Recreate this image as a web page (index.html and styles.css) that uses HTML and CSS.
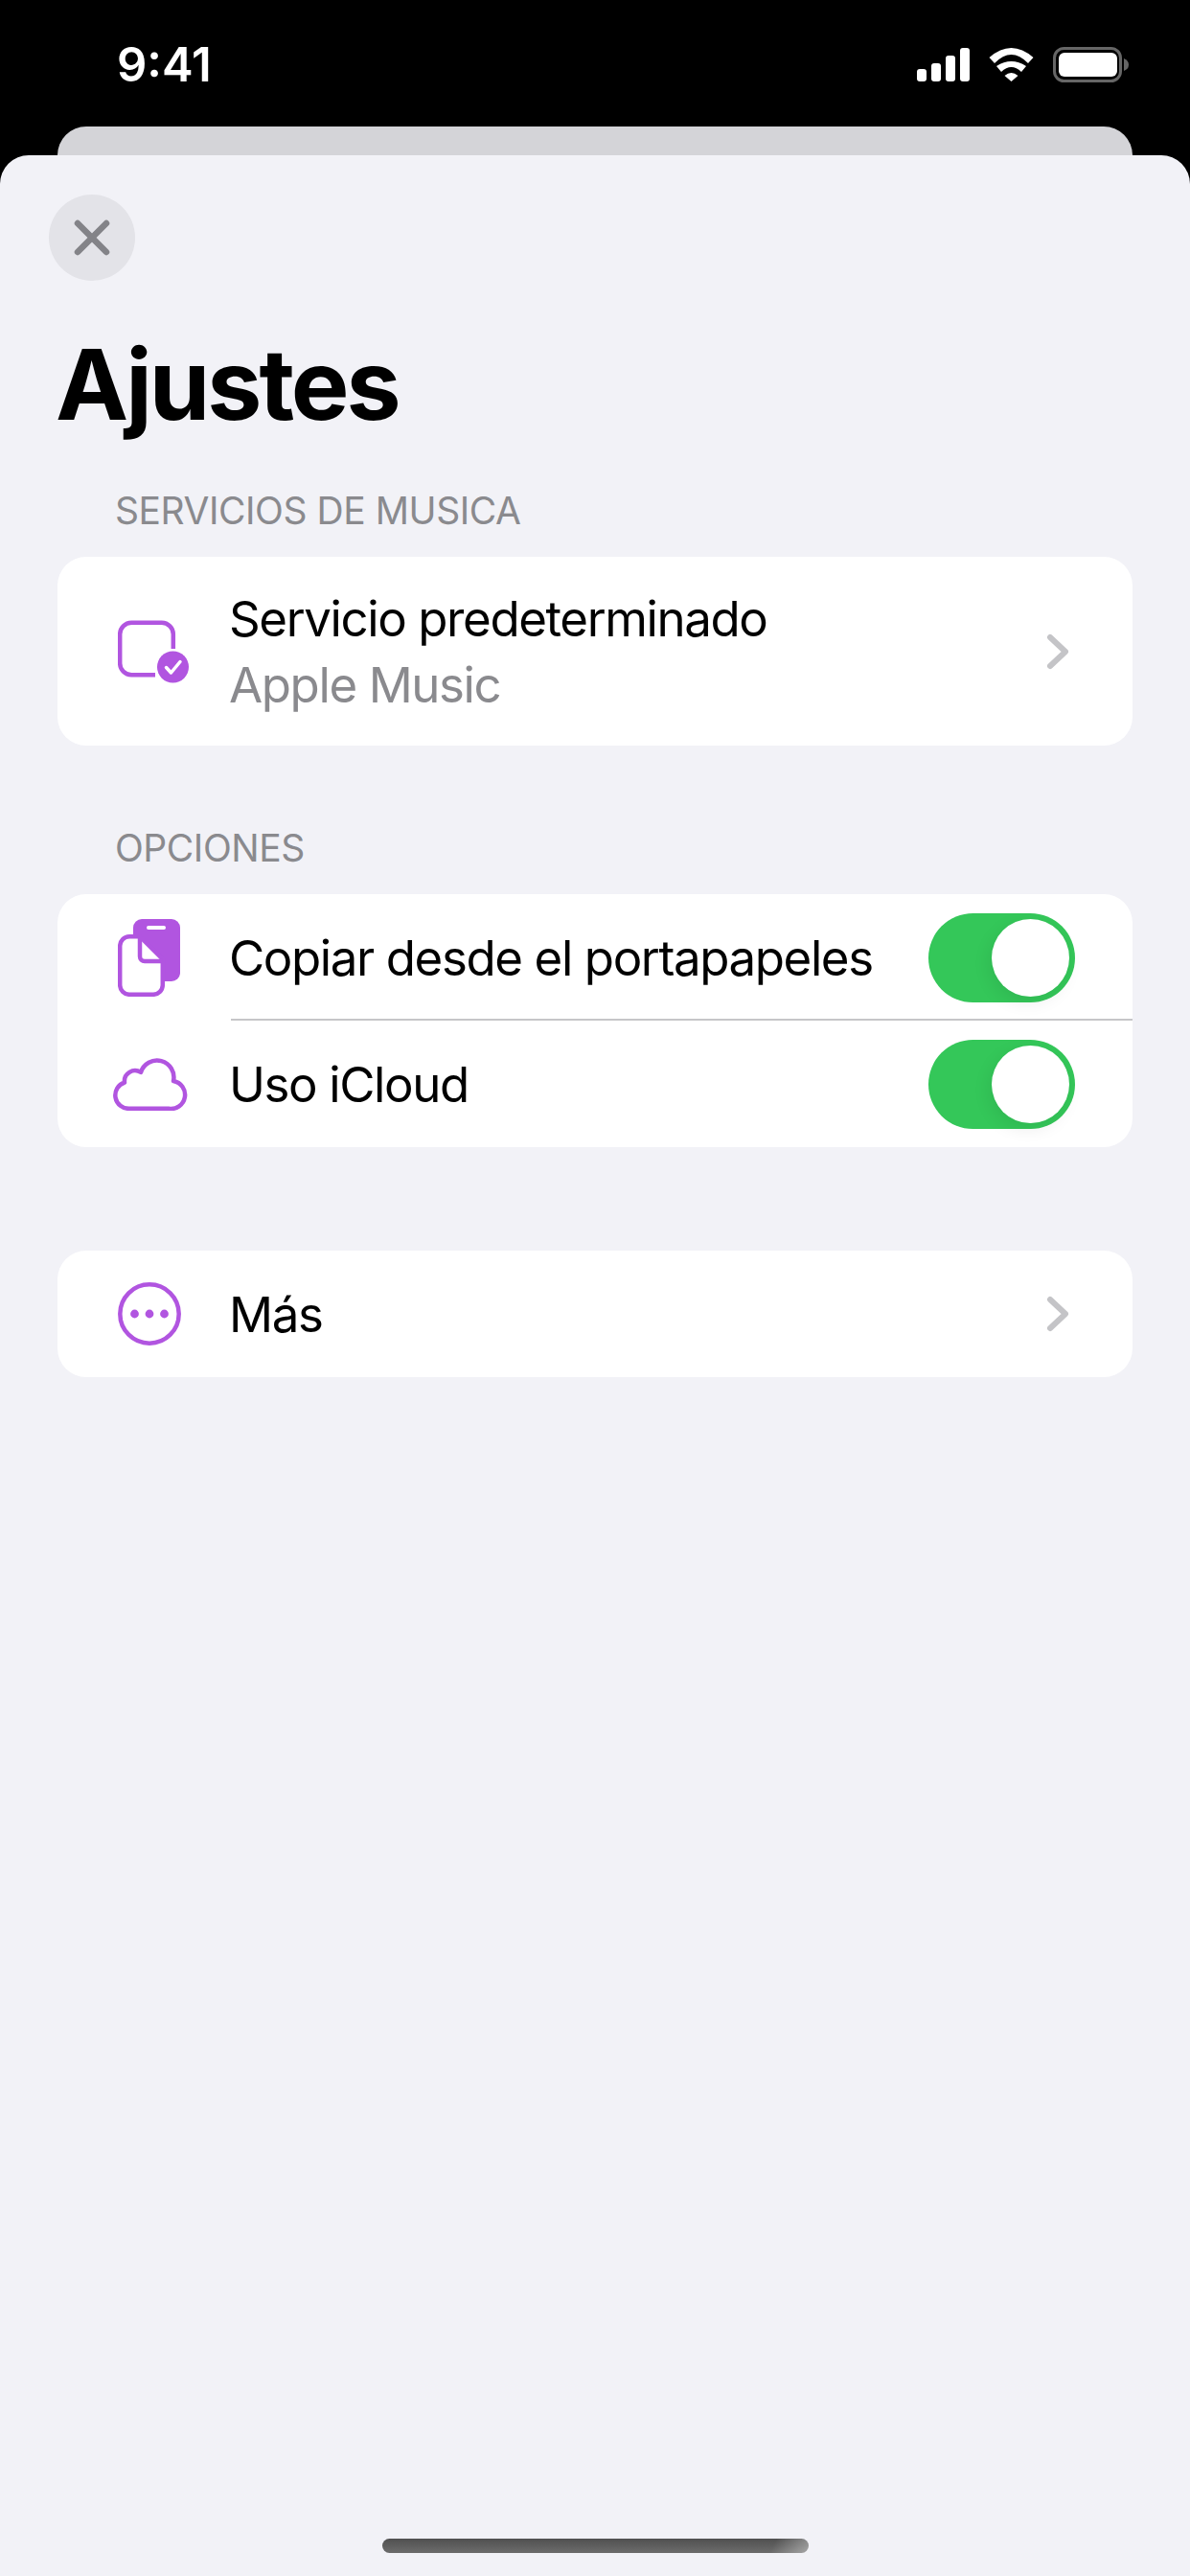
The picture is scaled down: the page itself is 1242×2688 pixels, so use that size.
FILE: index.html
```html
<!DOCTYPE html>
<html>
  <head>
    <title>Ajustes</title>
    <meta charset="UTF-8" />
    <link rel="stylesheet" href="styles.css">
  </head>

  <body>
    <div class="status">
      <span class="time">9:41</span>
      <div class="status-icons">
        <svg width="55" height="36" viewBox="0 0 55 36">
          <rect x="0" y="22" width="10" height="13" rx="3" fill="#fff"/>
          <rect x="15" y="16" width="10" height="19" rx="3" fill="#fff"/>
          <rect x="30" y="8" width="10" height="27" rx="3" fill="#fff"/>
          <rect x="45" y="0" width="10" height="35" rx="3" fill="#fff"/>
        </svg>
        <svg width="47" height="36" viewBox="0 0 47 36">
          <path d="M0.5 10 Q23.5 -10 46.5 10 L41 16 Q23.5 -2 6 16 Z" fill="#fff"/>
          <path d="M8 19 Q23.5 9 39 19 L34 25 Q23.5 15 13 25 Z" fill="#fff"/>
          <path d="M16.5 29 Q23.5 23 30.5 29 L23.5 35 Z" fill="#fff"/>
        </svg>
        <svg width="79" height="38" viewBox="0 0 79 38">
          <rect x="1.5" y="1.5" width="69" height="34" rx="10" fill="none" stroke="#666" stroke-width="3"/>
          <rect x="6" y="6" width="61" height="25" rx="6" fill="#fff"/>
          <path d="M74 12 Q79 14 79 18.5 Q79 23 74 25 Z" fill="#666"/>
        </svg>
      </div>
    </div>

    <div class="back-sheet"></div>

    <div class="sheet">
      <button class="close">
        <svg width="38" height="38" viewBox="0 0 38 38">
          <path d="M4 4 L34 34 M34 4 L4 34" fill="none" stroke="#838388" stroke-width="6.5" stroke-linecap="round"/>
        </svg>
      </button>

      <h1>Ajustes</h1>

      <p class="section-title">SERVICIOS DE MUSICA</p>
      <div class="card">
        <div class="row row-double">
          <div class="icon-box">
            <svg width="74" height="66" viewBox="0 0 74 66">
              <path d="M57.8 30 V15 A12 12 0 0 0 45.8 2.8 H14.2 A12 12 0 0 0 2.2 15 V45 A12 12 0 0 0 14.2 57.2 H39" fill="none" stroke="#b155e0" stroke-width="4.5"/>
              <circle cx="57.5" cy="49" r="16.5" fill="#b155e0"/>
              <path d="M50.5 49.5 L55.5 55 L65 43.5" fill="none" stroke="#fff" stroke-width="3.5" stroke-linecap="round" stroke-linejoin="round"/>
            </svg>
          </div>
          <div class="row-text">
            <span>Servicio predeterminado</span>
            <span class="sub">Apple Music</span>
          </div>
          <svg class="chevron" width="26" height="38" viewBox="0 0 26 38">
            <path d="M4 4 L20 19 L4 34" fill="none" stroke="#c4c4c7" stroke-width="6" stroke-linecap="round" stroke-linejoin="round"/>
          </svg>
        </div>
      </div>

      <p class="section-title section-gap">OPCIONES</p>
      <div class="card">
        <div class="row row-toggle">
          <div class="icon-box">
            <svg width="65" height="82" viewBox="0 0 65 82">
              <rect x="16" y="1" width="49" height="65" rx="9" fill="#b155e0"/>
              <rect x="30" y="8" width="20" height="4" rx="2" fill="#fff"/>
              <path d="M12 19.2 H23 L46.8 43 V70 A10 10 0 0 1 37 79.8 H12 A10 10 0 0 1 2.2 70 V29 A10 10 0 0 1 12 19.2 Z" fill="#fff" stroke="#b155e0" stroke-width="4.5"/>
              <path d="M23 19.2 V40 A5 5 0 0 0 28 45 H46.8" fill="none" stroke="#b155e0" stroke-width="4.5"/>
            </svg>
          </div>
          <span class="row-label">Copiar desde el portapapeles</span>
          <div class="toggle"><div class="knob"></div></div>
        </div>
        <div class="row row-toggle row-last">
          <div class="icon-box">
            <svg class="icon-cloud" width="80" height="55" viewBox="0 0 80 55">
              <path d="M19 52.8 A14 14 0 0 1 14 25.5 A11 11 0 0 1 31 15 A17.6 17.6 0 0 1 65 24 A14.5 14.5 0 0 1 60 52.8 Z" fill="none" stroke="#b155e0" stroke-width="4.5" stroke-linejoin="round"/>
            </svg>
          </div>
          <span class="row-label">Uso iCloud</span>
          <div class="toggle"><div class="knob"></div></div>
        </div>
      </div>

      <div class="card card-more">
        <div class="row row-more">
          <div class="icon-box">
            <svg width="66" height="66" viewBox="0 0 66 66">
              <circle cx="33" cy="33" r="30.7" fill="none" stroke="#b155e0" stroke-width="4.5"/>
              <circle cx="17.5" cy="33" r="4.4" fill="#b155e0"/>
              <circle cx="33" cy="33" r="4.4" fill="#b155e0"/>
              <circle cx="48.5" cy="33" r="4.4" fill="#b155e0"/>
            </svg>
          </div>
          <span class="row-label">Más</span>
          <svg class="chevron" width="26" height="38" viewBox="0 0 26 38">
            <path d="M4 4 L20 19 L4 34" fill="none" stroke="#c4c4c7" stroke-width="6" stroke-linecap="round" stroke-linejoin="round"/>
          </svg>
        </div>
      </div>

      <div class="home-bar"></div>
    </div>
  </body>
</html>
```

FILE: styles.css
```css
*{
    margin: 0;
    padding: 0;
    box-sizing: border-box;
    font-family: "Inter", "Liberation Sans", sans-serif;
}
html, body{
    width: 1242px;
    height: 2688px;
    overflow: hidden;
}
body{
    background: #000;
    display: flex;
    flex-direction: column;
    color: #000;
}
.status{
    height: 132px;
    display: flex;
    justify-content: space-between;
    align-items: flex-start;
    padding: 44px 64px 0 122px;
    color: #fff;
}
.time{
    font-size: 49px;
    line-height: 48px;
    font-weight: 600;
}
.status-icons{
    display: flex;
    align-items: center;
    gap: 20px;
    height: 38px;
    margin-top: 5px;
}
.back-sheet{
    height: 60px;
    margin: 0 60px -30px;
    background: #d4d4d8;
    border-radius: 30px 30px 0 0;
}
.sheet{
    flex: 1;
    position: relative;
    display: flex;
    flex-direction: column;
    padding: 41px 60px 0;
    background: #f2f2f7;
    border-radius: 30px 30px 0 0;
}
.close{
    width: 90px;
    height: 90px;
    margin-left: -9px;
    border: none;
    border-radius: 50%;
    background: #e3e3e8;
    display: flex;
    justify-content: center;
    align-items: center;
}
h1{
    font-size: 102px;
    line-height: 124px;
    font-weight: 700;
    letter-spacing: -3px;
    margin-top: 46px;
    margin-left: -2px;
}
.section-title{
    font-size: 39px;
    line-height: 48px;
    letter-spacing: -0.45px;
    color: #8a8a8e;
    padding-left: 60px;
    margin-top: 46px;
    margin-bottom: 24px;
}
.section-gap{
    margin-top: 83px;
}
.card{
    background: #fff;
    border-radius: 30px;
    overflow: hidden;
}
.card-more{
    margin-top: 108px;
}
.row{
    display: flex;
    align-items: center;
    padding-left: 63px;
    font-size: 51px;
    letter-spacing: -1.4px;
}
.icon-box{
    flex: none;
    width: 116px;
    display: flex;
    align-items: center;
}
.icon-cloud{
    flex: none;
    margin-left: -7px;
}
.row-double{
    height: 197px;
    padding-right: 64px;
}
.row-more{
    height: 132px;
    padding-right: 64px;
}
.row-toggle{
    height: 132px;
    padding-right: 60px;
    position: relative;
}
.row-toggle::after{
    content: '';
    position: absolute;
    left: 181px;
    right: 0;
    bottom: 0;
    height: 2px;
    background: #c6c6c8;
}
.row-last::after{
    display: none;
}
.row-text{
    display: flex;
    flex-direction: column;
    gap: 8px;
    flex: 1;
}
.row-label{
    flex: 1;
}
.sub{
    color: #8a8a8e;
}
.toggle{
    width: 153px;
    height: 93px;
    border-radius: 47px;
    background: #34c759;
    display: flex;
    justify-content: flex-end;
    align-items: center;
    padding-right: 6px;
}
.knob{
    width: 81px;
    height: 81px;
    border-radius: 50%;
    background: #fff;
    box-shadow: -3px 6px 18px rgba(0, 0, 0, 0.08);
}
.home-bar{
    position: absolute;
    left: 399px;
    top: 2487px;
    width: 445px;
    height: 15px;
    border-radius: 8px;
    background: linear-gradient(115deg, transparent 91%, rgba(255, 255, 255, 0.4) 100%), linear-gradient(#505050, #6c6c6c);
}
```
